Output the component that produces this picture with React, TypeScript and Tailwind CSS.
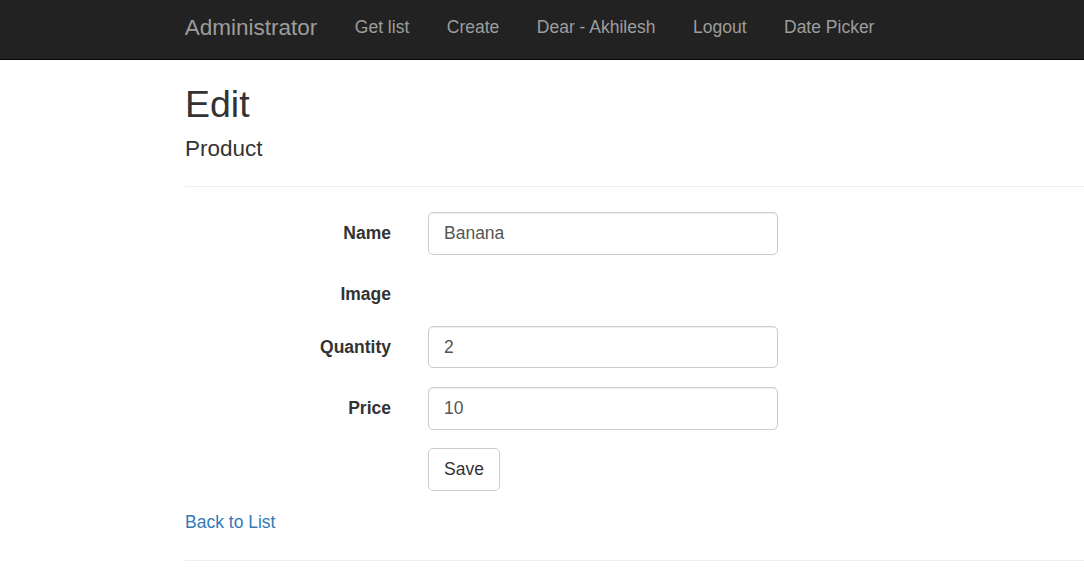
const navLinks = ["Get list", "Create", "Dear - Akhilesh", "Logout", "Date Picker"]

type Field = { label: string; value?: string }

const fields: Field[] = [
    { label: "Name", value: "Banana" },
    { label: "Image" },
    { label: "Quantity", value: "2" },
    { label: "Price", value: "10" },
]

function Navbar() {
    return (
        <nav className="h-[60px] bg-[#222] border-b border-[#080808]">
            <div className="flex items-start pl-[166px] h-full">
                <a href="#" className="px-[18.75px] pt-[14.5px] leading-[25px] text-[22.5px] text-[#9d9d9d]">
                    Administrator
                </a>
                {navLinks.map((l) => (
                    <a key={l} href="#" className="px-[18.75px] pt-[15px] leading-[25px] text-[17.5px] text-[#9d9d9d]">
                        {l}
                    </a>
                ))}
            </div>
        </nav>
    )
}

function FormRow({ field }: { field: Field }) {
    return (
        <div className="flex items-start mb-[18.75px]">
            <label className="w-[206px] shrink-0 text-right font-bold text-[17.5px] leading-[25px] pt-[8.75px] text-[#333]">
                {field.label}
            </label>
            {field.value !== undefined && (
                <input
                    defaultValue={field.value}
                    className="ml-[37px] w-[350px] h-[42.5px] px-[15px] border border-[#ccc] rounded-[5px] text-[17.5px] text-[#555] shadow-[inset_0_1px_1px_rgba(0,0,0,0.075)] outline-none"
                />
            )}
        </div>
    )
}

export default function App() {
    return (
        <div className="min-h-[585px] bg-white text-[#333]" style={{ fontFamily: '"Liberation Sans", Arial, sans-serif' }}>
            <Navbar />
            <div className="pl-[185px]">
                <h2 className="mt-[23.5px] text-[37.5px] leading-[1.1] font-normal">Edit</h2>
                <h4 className="mt-[12px] text-[22.5px] leading-[1.1] font-normal">Product</h4>
                <hr className="mt-[24.5px] border-t border-[#eee]" />
                <div className="pt-[25px]">
                    {fields.map((f) => (
                        <FormRow key={f.label} field={f} />
                    ))}
                    <div className="mb-[18.75px] pl-[243px]">
                        <button className="h-[42.5px] px-[15px] border border-[#ccc] rounded-[5px] bg-white text-[17.5px] text-[#333]">
                            Save
                        </button>
                    </div>
                </div>
                <div className="text-[17.5px] leading-[25px]">
                    <a href="#" className="text-[#337ab7]">Back to List</a>
                </div>
                <hr className="mt-[25px] border-t border-[#eee]" />
            </div>
        </div>
    )
}
